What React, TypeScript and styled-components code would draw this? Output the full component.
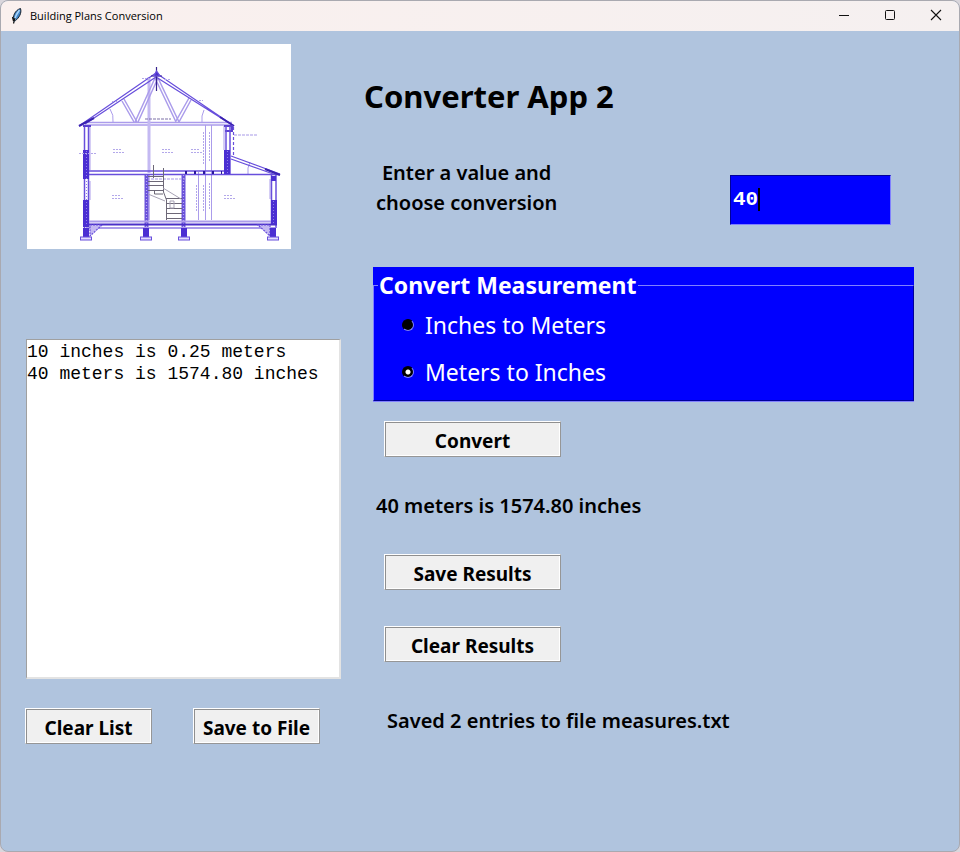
import React, { useState } from "react";
import styled, { createGlobalStyle } from "styled-components";

const SANS = '"Noto Sans", "Open Sans", sans-serif';
const MONO = '"Liberation Mono", "Courier New", monospace';

const GlobalStyle = createGlobalStyle`
  * { box-sizing: border-box; }
  body { margin: 0; background: #d9d6dc; }
`;

const AppWindow = styled.div`
  display: flex;
  flex-direction: column;
  min-height: 100vh;
  overflow: hidden;
  border: 1px solid #a9a9b0;
  border-radius: 8px;
  background: #b0c4de;
  color: #000;
  font-family: ${SANS};
`;

const TitleBar = styled.header`
  display: flex;
  align-items: center;
  height: 30px;
  padding-left: 8px;
  background: linear-gradient(90deg, #faf0ee, #f5f0f0);
`;

const WindowTitle = styled.span`
  flex: 1;
  padding-left: 6px;
  font-family: "Open Sans", sans-serif;
  font-size: 11px;
  line-height: 16px;
`;

const CaptionButton = styled.button`
  display: grid;
  place-items: center;
  width: 46px;
  height: 30px;
  padding: 0 0 2px;
  border: 0;
  background: transparent;
`;

const Body = styled.main`
  display: grid;
  grid-template-columns: 316px minmax(0, 1fr);
  column-gap: 32px;
  padding: 13px 45px 0 24px;
`;

const LeftColumn = styled.section`
  display: flex;
  flex-direction: column;
`;

const Plan = styled.svg`
  display: block;
  width: 264px;
  height: 205px;
  margin: 0 0 90px 2px;
  background: #fff;
`;

const ResultList = styled.textarea`
  display: block;
  width: 315px;
  height: 340px;
  margin-left: 1px;
  padding: 1px 0;
  border: 1px solid #e3e3e3;
  border-width: 1px 2px 2px 1px;
  border-top-color: #a0a0a0;
  border-left-color: #a0a0a0;
  border-radius: 0;
  outline: 0;
  resize: none;
  background: #fff;
  color: #000;
  font-family: ${MONO};
  font-size: 18px;
  line-height: 22px;
`;

const ListActions = styled.div`
  display: flex;
  gap: 41px;
  margin-top: 29px;
`;

const PushButton = styled.button<{ $wide?: boolean }>`
  width: ${(p) => (p.$wide ? 177 : 127)}px;
  height: 36px;
  padding: 4px 0 0;
  border: 1px solid #fff;
  border-right-color: #969696;
  border-bottom-color: #969696;
  border-radius: 0;
  background: #f0f0f0;
  box-shadow: inset 1px 1px #8f8f8f, inset -1px -1px #fff;
  color: #000;
  font-family: ${SANS};
  font-size: 19px;
  font-weight: 700;
  line-height: 26px;
  white-space: nowrap;
`;

const RightColumn = styled.section`
  display: flex;
  flex-direction: column;
`;

const Heading = styled.h1`
  margin: 30px 0 0 -9px;
  font-size: 31px;
  font-weight: 700;
  line-height: 44px;
`;

const EntryRow = styled.div`
  display: flex;
  align-items: flex-end;
  justify-content: space-between;
  margin-top: 40px;
  padding: 0 23px 0 3px;
`;

const Prompt = styled.label`
  padding-bottom: 7px;
  font-size: 20px;
  font-weight: 600;
  line-height: 30px;
  text-align: center;
`;

const EntryBox = styled.div`
  position: relative;
  font-family: ${MONO};
  font-size: 21px;
  font-weight: 700;
`;

const Entry = styled.input`
  display: block;
  width: 161px;
  height: 50px;
  padding: 0 2px 2px;
  border: 1px solid #00009a;
  border-right-color: #8080ff;
  border-bottom-color: #8080ff;
  border-radius: 0;
  outline: 0;
  background: #00f;
  color: #fff;
  font: inherit;
  caret-color: transparent;
`;

const Caret = styled.span`
  position: absolute;
  top: 13px;
  width: 2px;
  height: 23px;
  background: #000;
`;

const MeasurePanel = styled.div`
  margin-top: 42px;
  padding-top: 3px;
  border-bottom: 1px solid #8080ff;
  background: #00f;
  color: #fff;
`;

const MeasureGroup = styled.fieldset`
  min-width: 0;
  height: 131px;
  margin: 0;
  padding: 1px 0 0 28px;
  border: 1px solid #8080ff;
  border-right-color: #00009a;
  border-bottom-color: #00009a;
`;

const MeasureLegend = styled.legend`
  margin-left: -24px;
  padding: 0 1px;
  font-size: 23px;
  font-weight: 700;
  line-height: 30px;
`;

const Choice = styled.label`
  display: flex;
  align-items: center;
  gap: 11px;
  height: 47px;
  font-size: 23px;
  line-height: 32px;
`;

const Radio = styled.input`
  appearance: none;
  width: 12px;
  height: 12px;
  margin: 0;
  border: 1px solid #000;
  border-right-color: #8080ff;
  border-bottom-color: #8080ff;
  border-radius: 50%;
  background: #000;
  &:checked {
    background: radial-gradient(circle at center, #fff 2px, #000 3px);
  }
`;

const Actions = styled.div`
  display: flex;
  flex-direction: column;
  align-items: flex-start;
  padding: 19px 0 0 11px;
`;

const Message = styled.output<{ $outdent?: boolean }>`
  margin-left: ${(p) => (p.$outdent ? -8 : 3)}px;
  font-size: 20px;
  font-weight: 600;
  line-height: 28px;
`;

const Spacer = styled.div<{ $size: number }>`
  height: ${(p) => p.$size}px;
`;

function FeatherIcon() {
  return (
    <svg width="15" height="18" viewBox="0 0 15 18" aria-hidden="true">
      <path d="M5 14C3 10 6 3 11.500 1.500C13 6 10 11 6 14Z" fill="#4386c9" stroke="#17202a" />
      <path d="M10.500 3C8 6 6 10 5 15" fill="none" stroke="#a9d3f8" strokeWidth="1.500" />
      <path d="M6 11L4.500 16.500M3.500 10l1 4" stroke="#111" strokeWidth="1.200" />
    </svg>
  );
}

function HousePlan() {
  const piers = [86, 146, 184, 273];
  const steps = [176, 181, 185, 190];
  const lowerSteps = [198, 203, 208, 213, 218];
  const notes = [
    [113, 149], [162, 149], [191, 149], [112, 195], [224, 195],
  ];
  return (
    <Plan viewBox="27 44 264 205" role="img" aria-label="Cross-section of a house">
      <g fill="none" stroke="#684fdc" strokeWidth="1.200">
        <g stroke="#ab9ceb" strokeWidth="1.500">
          <path d="M85 122.500H232M85 125H230" />
          <path d="M149 77V173" strokeWidth="3" stroke="#c4b9f2" />
          <path d="M149 174V220" />
          <path d="M155 78L135 122M158 78L138 122M155 78L176 122M158 78L179 122" />
          <path d="M122 101L134 122M124 99L137 122M189 98L176 121M191 100L179 122" />
          <path d="M205.500 125V220M211.500 125V220M198.500 172V220" strokeWidth="1" />
          <path d="M90 126V170M224 126V150M90 181V200M270 179V199M110 109q4 6 3 13M204 110q-3 6-2 12M250 162q-3 6-2 12" strokeWidth="1" />
        </g>
        <path d="M79 126L156 73L234 126M85 124L156 77L229 123" />
        <path d="M156.500 67V91M151 76H162" stroke="#36238d" />
        <path d="M154 76L156.500 71L160 76Z" fill="#4a30c8" />
        <path d="M79 126L94 118M220 117L234 126" strokeWidth="2" stroke="#3a22b0" />
        <path d="M84.500 126V228M88.500 126V228" strokeWidth="1.500" />
        <path d="M83 126H91M224 126H232V131H225" strokeWidth="2" stroke="#5a40d0" />
        <path d="M226 126V174M230 126V174" strokeWidth="1.500" />
        <path d="M233.500 127V157" strokeDasharray="3 2" />
        <path d="M86 171H230M86 174.500H280" strokeWidth="1.500" />
        <path d="M185 172.500H222" strokeWidth="3" strokeDasharray="2 7" stroke="#2b179d" />
        <path d="M231 156L280 174M231 159L276 175" />
        <path d="M265 169L280 175" strokeWidth="2" stroke="#3a22b0" />
        <path d="M271.500 175V225M276 175V228" strokeWidth="1.500" />
        <path d="M146.500 174V230M183.500 174V230" strokeWidth="4" stroke="#6a52da" />
        <path d="M146.500 175V230M183.500 175V230" stroke="#b9adf0" strokeDasharray="1 2" />
        <path d="M86 221.500H275M86 228H275" stroke="#ab9ceb" strokeWidth="2" />
        <path d="M84 224.500H277" strokeWidth="2" stroke="#4a30c8" />
        <path d="M90 225H102L90 236Z" fill="#c4b9f2" strokeDasharray="2 1" />
        <path d="M258 225H270V236Z" fill="#c4b9f2" strokeDasharray="2 1" />
        <path d="M151 179H186M234 135H257" strokeDasharray="3 1" stroke="#a899e8" />
        <path d="M145 119H171" strokeDasharray="3 1" stroke="#7c70a8" />
      </g>
      <g fill="#4b2fd2">
        <rect x="83" y="150" width="6" height="29" />
        <rect x="83" y="200" width="6" height="27" />
        <rect x="224" y="150" width="6" height="24" />
        <rect x="271" y="200" width="6" height="24" />
        <rect x="271" y="176" width="5" height="5" />
        {piers.map((x) => (
          <React.Fragment key={x}>
            <rect x={x - 3} y="228" width="6" height="9" />
            <rect x={x - 5.5} y="237" width="11" height="3" fill="#e3ddff" stroke="#684fdc" />
          </React.Fragment>
        ))}
      </g>
      <g stroke="#8e7de6" strokeWidth="1" strokeDasharray="1 2">
        <path d="M86.500 151V224M227.500 151V173M273.500 201V223" />
      </g>
      <g fill="none" stroke="#6d6877" strokeWidth="1">
        {steps.map((y) => <path key={y} d={`M148 ${y}.500H163`} />)}
        {lowerSteps.map((y) => <path key={y} d={`M166 ${y}.500H182`} />)}
        <path d="M153.500 165V178M163.500 168V192L166.500 200V220M154.500 190V194H163" />
        <path d="M148 194L165 201M163 188L181 199M170 201V208H174V201Z" stroke="#a7a2b4" />
      </g>
      <g stroke="#b3a8ea" strokeWidth="1" strokeDasharray="2 1">
        {notes.map(([x, y]) => <path key={`${x}-${y}`} d={`M${x} ${y}.500h9M${x} ${y + 3}.500h11`} />)}
        <path d="M203.500 132V165M209.500 132V162M196.500 185V211M203.500 185V211M209.500 183V210M112 101.500h6M142 78.500h8M165 79.500h6M199 100.500h4M79 153.500h18" />
      </g>
    </Plan>
  );
}

export default function App() {
  const [value, setValue] = useState("40");
  const [mode, setMode] = useState("meters");
  const [list, setList] = useState("10 inches is 0.25 meters\n40 meters is 1574.80 inches");
  const [result, setResult] = useState("40 meters is 1574.80 inches");
  const [status, setStatus] = useState("Saved 2 entries to file measures.txt");

  const convert = () => {
    const n = Number(value);
    setResult(
      mode === "meters"
        ? `${value} meters is ${(n * 39.37).toFixed(2)} inches`
        : `${value} inches is ${(n * 0.0254).toFixed(2)} meters`
    );
  };

  const saveFile = () => {
    const count = list.split("\n").filter(Boolean).length;
    setStatus(`Saved ${count} entries to file measures.txt`);
  };

  return (
    <>
      <GlobalStyle />
      <AppWindow>
        <TitleBar>
          <FeatherIcon />
          <WindowTitle>Building Plans Conversion</WindowTitle>
          <CaptionButton aria-label="Minimize">
            <svg width="12" height="12" viewBox="0 0 12 12"><path d="M1 6.500H11" stroke="#111" /></svg>
          </CaptionButton>
          <CaptionButton aria-label="Maximize">
            <svg width="12" height="12" viewBox="0 0 12 12"><rect x="1.500" y="1.500" width="9" height="9" rx="1" fill="none" stroke="#111" /></svg>
          </CaptionButton>
          <CaptionButton aria-label="Close">
            <svg width="12" height="12" viewBox="0 0 12 12"><path d="M1 1L11 11M11 1L1 11" stroke="#111" strokeWidth="1.100" /></svg>
          </CaptionButton>
        </TitleBar>
        <Body>
          <LeftColumn>
            <HousePlan />
            <ResultList aria-label="Saved conversions" readOnly spellCheck={false} value={list} />
            <ListActions>
              <PushButton onClick={() => setList("")}>Clear List</PushButton>
              <PushButton onClick={saveFile}>Save to File</PushButton>
            </ListActions>
          </LeftColumn>
          <RightColumn>
            <Heading>Converter App 2</Heading>
            <EntryRow>
              <Prompt htmlFor="amount">Enter a value and<br />choose conversion</Prompt>
              <EntryBox>
                <Entry id="amount" value={value} onChange={(e) => setValue(e.target.value)} />
                <Caret style={{ left: `calc(${value.length}ch + 3px)` }} />
              </EntryBox>
            </EntryRow>
            <MeasurePanel>
              <MeasureGroup>
                <MeasureLegend>Convert Measurement</MeasureLegend>
                <Choice>
                  <Radio type="radio" name="mode" checked={mode === "inches"} onChange={() => setMode("inches")} />
                  Inches to Meters
                </Choice>
                <Choice>
                  <Radio type="radio" name="mode" checked={mode === "meters"} onChange={() => setMode("meters")} />
                  Meters to Inches
                </Choice>
              </MeasureGroup>
            </MeasurePanel>
            <Actions>
              <PushButton $wide onClick={convert}>Convert</PushButton>
              <Spacer $size={35} />
              <Message $outdent>{result}</Message>
              <Spacer $size={34} />
              <PushButton $wide onClick={() => setList(list ? `${list}\n${result}` : result)}>Save Results</PushButton>
              <Spacer $size={36} />
              <PushButton $wide onClick={() => setResult("")}>Clear Results</PushButton>
              <Spacer $size={45} />
              <Message>{status}</Message>
            </Actions>
          </RightColumn>
        </Body>
      </AppWindow>
    </>
  );
}
